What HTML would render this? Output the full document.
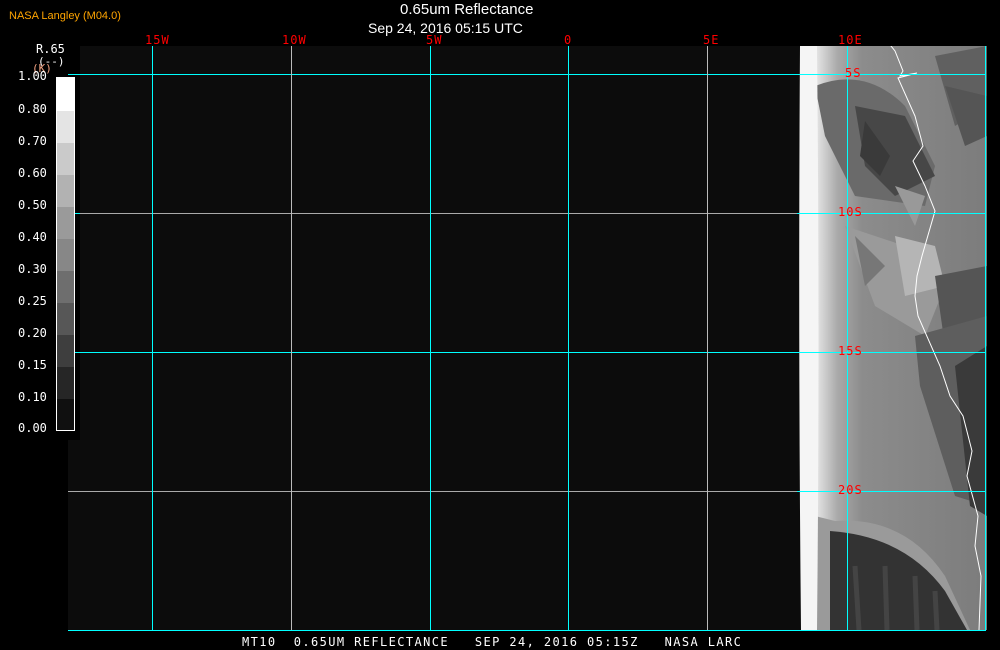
<!DOCTYPE html>
<html><head><style>
body{margin:0;background:#000;width:1000px;height:650px;overflow:hidden;position:relative;font-family:"DejaVu Sans Mono","Liberation Mono",monospace;}
.a{position:absolute}
.t{position:absolute;color:#fff;font-family:"Liberation Sans",sans-serif}
.lab{position:absolute;color:#f00;font-size:12px;letter-spacing:1px;font-family:"DejaVu Sans Mono",monospace}
.v{position:absolute;color:#fff;font-size:12px;left:18px}
</style></head><body>
<div class="t" style="left:9px;top:10px;font-size:11px;color:#ffa500">NASA Langley (M04.0)</div>
<div class="t" style="left:400px;top:1px;font-size:15px">0.65um Reflectance</div>
<div class="t" style="left:368px;top:20px;font-size:14px">Sep 24, 2016 05:15 UTC</div>

<div class="a" style="left:68px;top:46px;width:729px;height:584px;background:#0c0c0c"></div>
<svg class="a" style="left:795px;top:46px" width="192" height="584">
<defs><linearGradient id="g" x1="0" x2="1"><stop offset="0" stop-color="#fff"/><stop offset=".12" stop-color="#e0e0e0"/><stop offset=".22" stop-color="#aaa"/><stop offset=".35" stop-color="#8c8c8c"/><stop offset="1" stop-color="#7c7c7c"/></linearGradient></defs>
<rect width="192" height="584" fill="url(#g)"/>
<path d="M20 40 Q70 20 110 60 L140 120 L130 160 L60 150 L30 90 Z" fill="#6a6a6a"/>
<path d="M60 60 L110 70 L140 130 L100 150 L70 120 Z" fill="#474747"/>
<path d="M70 75 L95 110 L85 130 L65 110 Z" fill="#3a3a3a"/>
<path d="M140 10 L192 0 L192 60 L160 80 Z" fill="#606060"/>
<path d="M150 40 L192 50 L192 90 L170 100 Z" fill="#555"/>
<path d="M50 180 L110 200 L150 240 L130 290 L80 260 Z" fill="#9a9a9a"/>
<path d="M100 190 L140 200 L150 240 L110 250 Z" fill="#b5b5b5"/>
<path d="M140 230 L192 220 L192 320 L150 300 Z" fill="#555"/>
<path d="M120 290 L192 270 L192 460 L160 450 L125 340 Z" fill="#5e5e5e"/>
<path d="M160 320 L192 300 L192 470 L175 460 Z" fill="#3a3a3a"/>
<path d="M100 140 L130 150 L120 180 Z" fill="#999"/>
<path d="M60 190 L90 220 L70 240 Z" fill="#777"/>
<path d="M20 470 L40 475 Q110 470 150 530 L175 584 L20 584 Z" fill="#9a9a9a"/>
<path d="M35 485 Q110 490 150 545 L172 584 L35 584 Z" fill="#333"/>
<path d="M60 520 L64 584 M90 520 L92 584 M120 530 L122 584 M140 545 L142 584" stroke="#444" stroke-width="5"/>
<path d="M0 0 L22 0 Q25 300 22 584 L0 584 Z" fill="#f5f5f5"/>
<path d="M0 0 L5 0 Q3 290 6 584 L0 584 Z" fill="#0c0c0c"/>
<polyline points="45,-46 80,-20 100,5 108,25 105,30 122,27 103,32 120,70 128,100 118,115 130,140 140,165 127,210 122,230 120,250 123,270 145,320 155,350 168,370 177,405 172,430 183,470 180,500 186,530 184,584" fill="none" stroke="#fff" stroke-width="1"/>
</svg>

<!-- grid -->
<div class="a" style="left:68px;top:74px;width:917px;height:1px;background:#0ff"></div>
<div class="a" style="left:68px;top:213px;width:729px;height:1px;background:#aaa"></div>
<div class="a" style="left:797px;top:213px;width:188px;height:1px;background:#0ff"></div>
<div class="a" style="left:68px;top:352px;width:917px;height:1px;background:#0ff"></div>
<div class="a" style="left:68px;top:491px;width:729px;height:1px;background:#aaa"></div>
<div class="a" style="left:797px;top:491px;width:188px;height:1px;background:#0ff"></div>
<div class="a" style="left:68px;top:630px;width:918px;height:1px;background:#0ff"></div>
<div class="a" style="left:152px;top:46px;width:1px;height:584px;background:#0ff"></div>
<div class="a" style="left:291px;top:46px;width:1px;height:584px;background:#bbb"></div>
<div class="a" style="left:430px;top:46px;width:1px;height:584px;background:#0ff"></div>
<div class="a" style="left:568px;top:46px;width:1px;height:584px;background:#0ff"></div>
<div class="a" style="left:707px;top:46px;width:1px;height:584px;background:#bbb"></div>
<div class="a" style="left:847px;top:46px;width:1px;height:584px;background:#0ff"></div>
<div class="a" style="left:985px;top:46px;width:1px;height:585px;background:#0ff"></div>

<div class="lab" style="left:145px;top:33px">15W</div>
<div class="lab" style="left:282px;top:33px">10W</div>
<div class="lab" style="left:426px;top:33px">5W</div>
<div class="lab" style="left:564px;top:33px">0</div>
<div class="lab" style="left:703px;top:33px">5E</div>
<div class="lab" style="left:838px;top:33px">10E</div>
<div class="lab" style="left:845px;top:66px">5S</div>
<div class="lab" style="left:838px;top:205px">10S</div>
<div class="lab" style="left:838px;top:344px">15S</div>
<div class="lab" style="left:838px;top:483px">20S</div>

<!-- legend -->
<div class="a" style="left:0;top:46px;width:80px;height:394px;background:#000"></div>
<div class="v" style="left:36px;top:42px">R.65</div>
<div class="v" style="left:38px;top:55px;font-size:11px">(--)</div>
<div class="a" style="left:32px;top:62px;color:#f0a080;font-size:11px">(K)</div>
<div class="a" style="left:68px;top:74px;width:12px;height:1px;background:#0ff"></div>
<div class="a" style="left:68px;top:213px;width:12px;height:1px;background:#0ff"></div>
<div class="a" style="left:68px;top:352px;width:12px;height:1px;background:#0ff"></div>
<div class="a" style="left:56px;top:77px;width:17px;height:352px;border:1px solid #fff;background:linear-gradient(#fff 0 33px,#e4e4e4 33px 65px,#cacaca 65px 97px,#b2b2b2 97px 129px,#9a9a9a 129px 161px,#878787 161px 193px,#6e6e6e 193px 225px,#575757 225px 257px,#3e3e3e 257px 289px,#262626 289px 321px,#101010 321px)"></div>
<div class="v" style="top:69px">1.00</div>
<div class="v" style="top:102px">0.80</div>
<div class="v" style="top:134px">0.70</div>
<div class="v" style="top:166px">0.60</div>
<div class="v" style="top:198px">0.50</div>
<div class="v" style="top:230px">0.40</div>
<div class="v" style="top:262px">0.30</div>
<div class="v" style="top:294px">0.25</div>
<div class="v" style="top:326px">0.20</div>
<div class="v" style="top:358px">0.15</div>
<div class="v" style="top:390px">0.10</div>
<div class="v" style="top:421px">0.00</div>

<div class="a" style="left:242px;top:635px;color:#fff;font-size:12px;letter-spacing:1.4px;white-space:pre">MT10  0.65UM REFLECTANCE   SEP 24, 2016 05:15Z   NASA LARC</div>
</body></html>
